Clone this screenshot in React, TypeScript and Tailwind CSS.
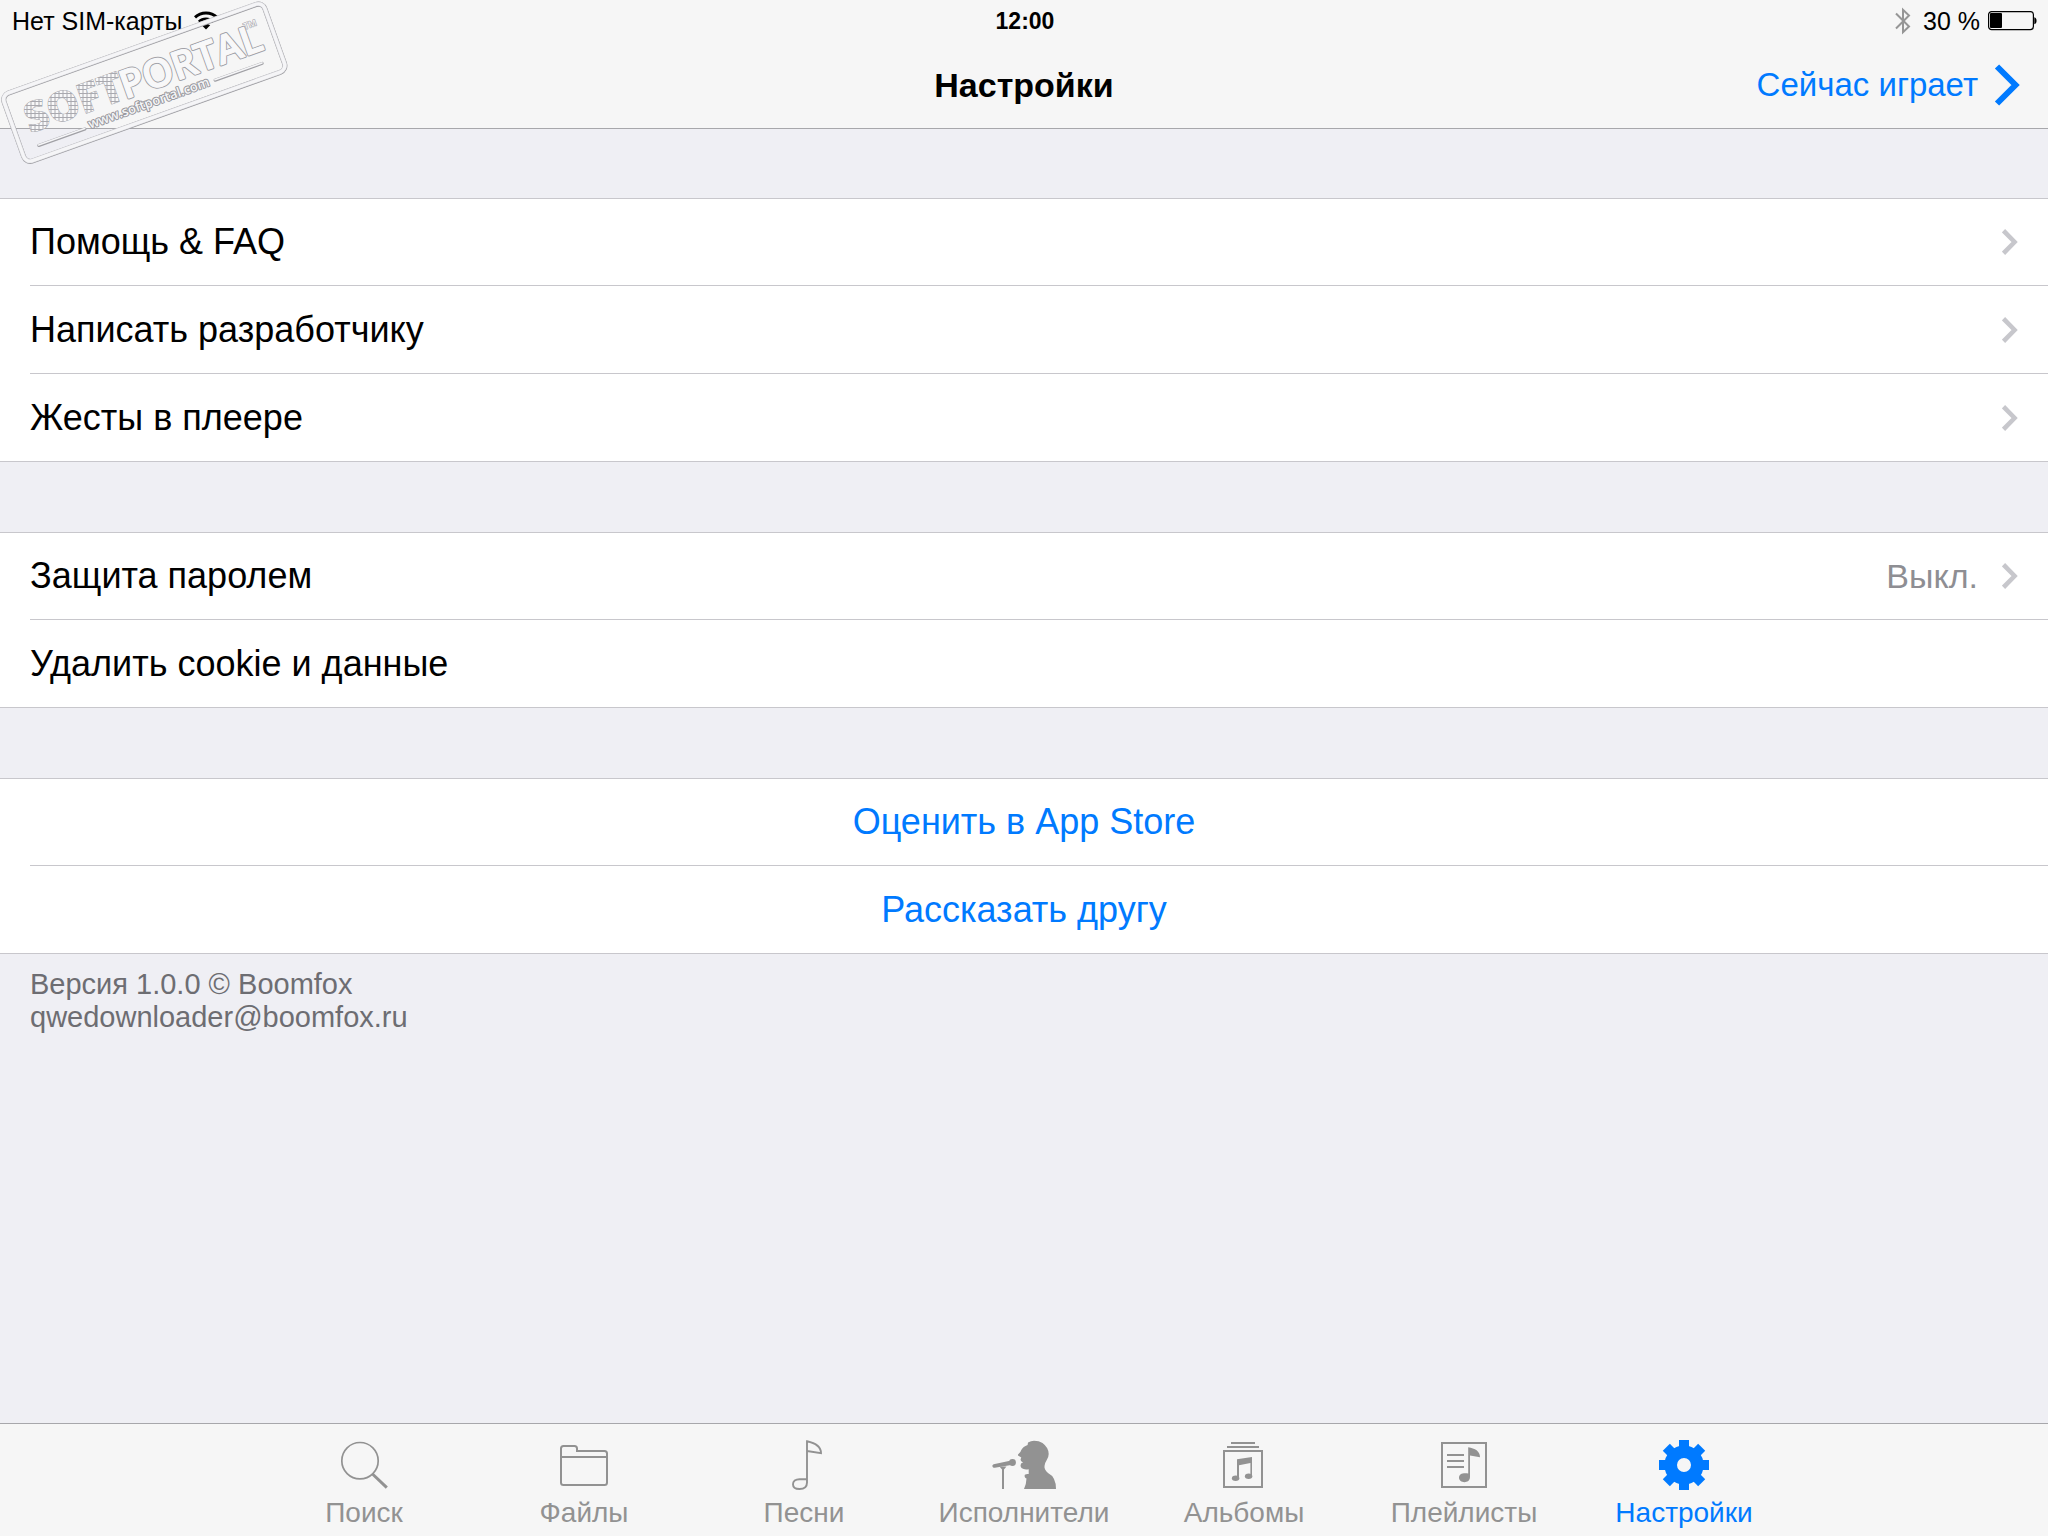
import type { ReactNode } from "react";

type Row = { label: string; value?: string; chevron?: boolean; centered?: boolean };

const groups: Row[][] = [
  [
    { label: "Помощь & FAQ", chevron: true },
    { label: "Написать разработчику", chevron: true },
    { label: "Жесты в плеере", chevron: true },
  ],
  [
    { label: "Защита паролем", value: "Выкл.", chevron: true },
    { label: "Удалить cookie и данные" },
  ],
  [
    { label: "Оценить в App Store", centered: true },
    { label: "Рассказать другу", centered: true },
  ],
];

function WifiIcon() {
  return (
    <svg className="h-5 w-6" viewBox="0 0 24 20" fill="none" stroke="currentColor" strokeWidth="3" aria-hidden="true">
      <path d="M1 6.4C7 .6 17 .6 23 6.4" />
      <path d="M5 10.8c4-3.7 10-3.7 14 0" />
      <path d="M12 18.6l-4.2-4.3c2.4-2.2 6-2.2 8.4 0z" fill="currentColor" stroke="none" />
    </svg>
  );
}

function BluetoothIcon() {
  return (
    <svg className="h-7 w-4 text-[#969696]" viewBox="0 0 16 28" fill="none" stroke="currentColor" strokeWidth="2" aria-hidden="true">
      <path d="M1 6.500L14 19.500L8 25.200V2.800L14 8.500L1 21.500" />
    </svg>
  );
}

function BatteryIcon() {
  return (
    <svg className="h-5 w-[50px]" viewBox="0 0 50 20" aria-hidden="true">
      <rect x="0.600" y="0.600" width="44.800" height="18" rx="3" fill="none" stroke="#000" strokeWidth="1.200" />
      <rect x="2" y="2" width="12" height="15" rx="1" fill="#000" />
      <path d="M46.300 6.200c3 .6 3 6.400 0 7z" fill="#000" />
    </svg>
  );
}

function RowChevron() {
  return (
    <svg className="h-[26px] w-4 shrink-0" viewBox="0 0 16 26" fill="none" stroke="#c7c7cc" strokeWidth="4.500" aria-hidden="true">
      <path d="M1.500 1.700L12.600 13L1.500 24.300" />
    </svg>
  );
}

function TabIcon({ children }: { children: ReactNode }) {
  return (
    <svg className="h-14 w-[72px]" viewBox="0 0 72 56" fill="none" stroke="currentColor" strokeWidth="2" aria-hidden="true">
      {children}
    </svg>
  );
}

const tabs: { label: string; active?: boolean; icon: ReactNode }[] = [
  {
    label: "Поиск",
    icon: (
      <>
        <circle cx="32" cy="22.700" r="18.200" strokeWidth="1.700" />
        <path d="M44.500 36L58.800 49.600" strokeWidth="3" />
      </>
    ),
  },
  {
    label: "Файлы",
    icon: (
      <>
        <path d="M13 45V10.500Q13 8 15.500 8H26.500Q29 8 29 10.500V13H56.500Q59 13 59 15.500V44.500Q59 47 56.500 47H15.500Q13 47 13 44.500" />
        <path d="M13 19H59" />
      </>
    ),
  },
  {
    label: "Песни",
    icon: (
      <path
        d="M39 45V3.300C47 5 53 8 53 15.200L39 13M39 41.200H31.500C27.500 41.200 25 43.300 25 46.200S27.500 51 31.500 51C36.500 51 39 49 39 44.500"
        strokeWidth="1.900"
      />
    ),
  },
  {
    label: "Исполнители",
    icon: (
      <g fill="currentColor" stroke="none">
        <path d="M5.600 26.200L22 22.800L23 27L6.800 29.700A1.800 1.800 0 0 1 5.600 26.200Z" />
        <circle cx="24.500" cy="24.500" r="3.400" />
        <path d="M11.500 28.500H18.500L16 31.500V51H14V31.500Z" />
        <path d="M40 4.600Q43 2.700 46 2.700Q51 2.800 54.500 5Q60.600 9.500 60.700 16Q60.600 19 59 21.500Q57 24.500 56.500 28Q56 31.500 60 35Q68 39 68 51H36Q38.400 46 38.500 40.600Q36 39.500 36.800 36.800Q38.500 35.600 40.700 36V31.200Q36 32 33.500 30Q31.800 28 33 25.500L35 24.500L33 23Q32 21.500 33.300 19.600L30 17.600V16.400Q33 14 33.300 12Q35 8.500 39.600 7Z" />
      </g>
    ),
  },
  {
    label: "Альбомы",
    icon: (
      <>
        <path d="M23 5H47M19 9H51" />
        <rect x="16" y="13" width="38" height="36" />
        <g fill="currentColor" stroke="none">
          <path d="M29 21.300L44 19V38.500H42.400V24.900L31 27.300V40.500H29Z" />
          <ellipse cx="27.600" cy="40.300" rx="3.700" ry="2.700" />
          <ellipse cx="40.600" cy="38.300" rx="3.700" ry="2.700" />
        </g>
      </>
    ),
  },
  {
    label: "Плейлисты",
    icon: (
      <>
        <rect x="14" y="5" width="44" height="44" />
        <path d="M19 17H36M19 23H36M19 29H36" />
        <g fill="currentColor" stroke="none">
          <path d="M40.200 9.300C47 10.500 52 13 52 19.300L42 17.600V39C42 46 31 45.500 31 39.800C31 36 34.500 34.800 40.200 35.500Z" />
        </g>
      </>
    ),
  },
  {
    label: "Настройки",
    active: true,
    icon: (
      <>
        <circle cx="36" cy="27" r="13.300" strokeWidth="12.600" />
        <g fill="currentColor" stroke="none">
          {[0, 45, 90, 135, 180, 225, 270, 315].map((angle) => (
            <rect key={angle} x="31" y="2" width="10" height="8" transform={`rotate(${angle} 36 27)`} />
          ))}
        </g>
      </>
    ),
  },
];

function Watermark() {
  return (
    <svg
      className="pointer-events-none absolute left-0 top-0 h-[180px] w-[300px]"
      viewBox="0 0 300 180"
      role="img"
      aria-label="SoftPortal"
    >
      <defs>
        <pattern id="grid" width="4" height="4" patternUnits="userSpaceOnUse" patternTransform="rotate(19.700)">
          <rect width="4" height="4" fill="#a9a9af" />
          <rect width="3" height="3" fill="#f8f8f9" />
        </pattern>
      </defs>
      <g transform="translate(143.500 82) rotate(-19.700)">
        <g fill="none">
          <rect x="-138" y="-35" width="277" height="72" rx="7" stroke="#97979c" strokeWidth="5" />
          <rect x="-138" y="-35.400" width="277" height="72" rx="7" stroke="#d0d0d4" strokeWidth="4.600" />
          <rect x="-138" y="-35.300" width="277" height="72" rx="7" stroke="#f5f5f7" strokeWidth="3.400" />
          <path d="M-120 24.500H-71M68 22.500H118" stroke="#a0a0a5" strokeWidth="3" strokeLinecap="round" />
          <path d="M-120 24H-71M68 22H118" stroke="#f5f5f7" strokeWidth="1.600" strokeLinecap="round" />
        </g>
        <g fontFamily="'Open Sans', sans-serif" fontWeight="600" strokeLinejoin="round" style={{ paintOrder: "stroke" }}>
          <text x="-124" y="10" fontSize="41" fontWeight="800" fill="url(#grid)" stroke="#a9a9af" strokeWidth="1">
            SOFT
          </text>
          <text x="-23" y="10" fontSize="39" fill="#f8f8f9" stroke="#a2a2a8" strokeWidth="3">
            PORTAL
          </text>
          <text x="-23" y="10" fontSize="39" fill="#f8f8f9" stroke="#f8f8f9" strokeWidth="1" aria-hidden="true">
            PORTAL
          </text>
          <text x="-66" y="26" fontSize="13" fill="#f5f5f7" stroke="#98989e" strokeWidth="2">
            www.softportal.com
          </text>
          <text x="113" y="-15" fontSize="9" fill="#f5f5f7" stroke="#a2a2a8" strokeWidth="1">
            TM
          </text>
        </g>
      </g>
    </svg>
  );
}

export default function App() {
  return (
    <div className="relative flex min-h-screen flex-col bg-[#efeff4] font-['Liberation_Sans',Arial,sans-serif] text-black">
      <header className="border-b border-[#a7a7ab] bg-[#f6f6f6]">
        <div className="grid h-[42px] grid-cols-3 items-center pl-3 pr-[10px] text-[25px] leading-7">
          <div className="flex items-center gap-3">
            <span>Нет SIM-карты</span>
            <WifiIcon />
          </div>
          <div className="text-center text-[23px] font-bold">12:00</div>
          <div className="flex items-center justify-end gap-3">
            <BluetoothIcon />
            <div className="flex items-center gap-2">
              <span>30 %</span>
              <BatteryIcon />
            </div>
          </div>
        </div>
        <div className="grid h-[86px] grid-cols-[1fr_auto_1fr] items-center px-7">
          <h1 className="col-start-2 text-[34px] font-bold leading-10">Настройки</h1>
          <button type="button" className="flex items-center gap-4 justify-self-end text-[33px] leading-10 text-[#007aff]">
            <span>Сейчас играет</span>
            <svg className="h-[42px] w-[26px]" viewBox="0 0 26 42" fill="none" stroke="currentColor" strokeWidth="6" aria-hidden="true">
              <path d="M3 2.500L21.500 21L3 39.500" />
            </svg>
          </button>
        </div>
      </header>

      <main className="flex flex-1 flex-col gap-[70px] pt-[69px]">
        {groups.map((rows, index) => (
          <ul key={index} className="border-y border-[#c8c7cc] bg-white">
            {rows.map((row) => (
              <li key={row.label} className="group ml-[30px] border-b border-[#c8c7cc] last:border-b-0">
                <button
                  type="button"
                  className={
                    "flex h-[87px] w-full items-center pr-[30px] text-[36px] leading-10 group-first:h-[86px] " +
                    (row.centered ? "justify-center text-[#007aff]" : "justify-between")
                  }
                >
                  <span>{row.label}</span>
                  {(row.value || row.chevron) && (
                    <span className="flex items-center gap-6 text-[34px] text-[#8e8e93]">
                      {row.value}
                      <RowChevron />
                    </span>
                  )}
                </button>
              </li>
            ))}
          </ul>
        ))}
        <footer className="-mt-[70px] px-[30px] pt-[14px] text-[29px] leading-[33px] text-[#6d6d72]">
          <p>Версия 1.0.0 © Boomfox</p>
          <p>qwedownloader@boomfox.ru</p>
        </footer>
      </main>

      <nav className="flex h-[113px] justify-center border-t border-[#a7a7ab] bg-[#f6f6f6]">
        {tabs.map((tab) => (
          <button
            key={tab.label}
            type="button"
            aria-current={tab.active ? "page" : undefined}
            className={
              "flex w-[220px] flex-col items-center pt-[14px] text-[28px] leading-[38px] " +
              (tab.active ? "text-[#007aff]" : "text-[#929292]")
            }
          >
            <TabIcon>{tab.icon}</TabIcon>
            <span>{tab.label}</span>
          </button>
        ))}
      </nav>
      <Watermark />
    </div>
  );
}
